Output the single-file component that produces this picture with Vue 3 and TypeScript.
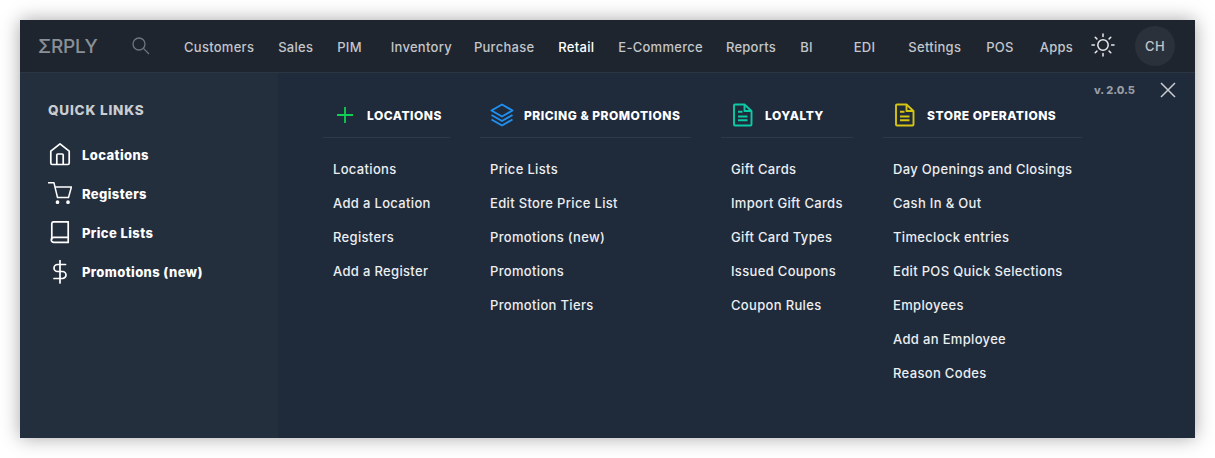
<template>
  <div class="window">
    <header class="topbar">
      <span class="logo">ΣRPLY</span>
      <svg class="search" width="20" height="20" viewBox="0 0 20 20" fill="none" stroke="currentColor" stroke-width="1.3">
        <circle cx="8" cy="8" r="6" />
        <path d="M12.4 12.4 18 18" />
      </svg>
      <nav class="nav">
        <a
          v-for="item in navItems"
          :key="item.label"
          :class="{ active: item.label === 'Retail' }"
          :style="{ marginRight: item.extra + 'px' }"
        >{{ item.label }}</a>
      </nav>
      <svg class="sun" width="24" height="24" viewBox="0 0 24 24" fill="none" stroke="currentColor" stroke-width="1.5" stroke-linecap="round">
        <circle cx="12" cy="12" r="5.2" />
        <path d="M12 1v2.4M12 20.6V23M1 12h2.4M20.6 12H23M4.2 4.2 5.9 5.9M18.1 18.1l1.7 1.7M4.2 19.8l1.7-1.7M18.1 5.9l1.7-1.7" />
      </svg>
      <div class="avatar">CH</div>
    </header>

    <div class="panel">
      <aside class="sidebar">
        <h3>QUICK LINKS</h3>
        <a class="quick"><svg width="24" height="24" viewBox="0 0 24 24" fill="none" stroke="currentColor" stroke-width="1.7" stroke-linejoin="round">
          <path d="M2.800 8.200 12 0.900l9.200 7.300V20a1.500 1.500 0 0 1-1.500 1.500H4.300A1.500 1.500 0 0 1 2.800 20z" />
          <path d="M8.800 21.500V12a1 1 0 0 1 1-1h4.400a1 1 0 0 1 1 1v9.500" />
        </svg>Locations</a>
        <a class="quick"><svg width="24" height="24" viewBox="0 0 24 24" fill="none" stroke="currentColor" stroke-width="1.5" stroke-linecap="round" stroke-linejoin="round">
          <path d="M0.500 0.800H6l3.500 14.700h11L23.400 5H6.800" />
          <circle cx="9.500" cy="20.200" r="1.100" fill="currentColor" />
          <circle cx="20" cy="20.200" r="1.100" fill="currentColor" />
        </svg>Registers</a>
        <a class="quick"><svg width="24" height="24" viewBox="0 0 24 24" fill="none" stroke="currentColor" stroke-width="1.7" stroke-linejoin="round">
          <path d="M3.800 18.800V2.800a2 2 0 0 1 2-2h14.400v20.600H5.800a2.300 2.300 0 0 1 0-5h14.400" />
        </svg>Price Lists</a>
        <a class="quick"><svg width="24" height="24" viewBox="0 0 24 24" fill="none" stroke="currentColor" stroke-width="1.7" stroke-linecap="round" stroke-linejoin="round">
          <path d="M12 0v23M17.500 4.500H9.500a3.500 3.500 0 0 0 0 7h5a3.500 3.500 0 0 1 0 7H6" />
        </svg>Promotions (new)</a>
      </aside>

      <main class="menu">
        <section v-for="col in columns" :key="col.title" class="column" :style="{ width: col.width + 'px' }">
          <div class="head">
            <span class="head-icon">
              <svg v-if="col.icon === 'plus'" class="plus" width="18" height="18" viewBox="0 0 18 18" fill="none" stroke="#0fd052" stroke-width="1.800">
                <path d="M9 1v16M1 9h16" />
              </svg>
              <svg v-else-if="col.icon === 'layers'" width="24" height="24" viewBox="0 0 24 24" fill="none" stroke="#2090f0" stroke-width="2" stroke-linejoin="round">
                <path d="M12 1.500 22.500 7.500 12 13.500 1.500 7.500z" />
                <path d="M1.500 12 12 18l10.500-6" />
                <path d="M1.500 16.500 12 22.500l10.500-6" />
              </svg>
              <svg v-else width="24" height="24" viewBox="0 0 24 24" fill="none" :stroke="col.color" stroke-width="1.900" stroke-linejoin="round">
                <path d="M4 1.500h9.500l7 6.500v13.500a1 1 0 0 1-1 1H4a1 1 0 0 1-1-1v-19a1 1 0 0 1 1-1z" />
                <path d="M13.500 1.500V8h7M7 8.700h4.500M7 13.500h9.500M7 17.200h9.500" />
              </svg>
            </span>
            <span class="head-title">{{ col.title }}</span>
          </div>
          <ul>
            <li v-for="link in col.links" :key="link">{{ link }}</li>
          </ul>
        </section>
      </main>

      <span class="version">v. 2.0.5</span>
      <svg class="close" width="16" height="16" viewBox="0 0 16 16" fill="none" stroke="currentColor" stroke-width="1.500">
        <path d="M1 1l14 14M15 1 1 15" />
      </svg>
    </div>
  </div>
</template>

<script setup lang="ts">
interface NavItem {
  label: string;
  extra: number;
}

interface Column {
  title: string;
  icon: "plus" | "layers" | "file";
  color?: string;
  width: number;
  links: string[];
}

const navItems: NavItem[] = [
  { label: "Customers", extra: 0 },
  { label: "Sales", extra: 0 },
  { label: "PIM", extra: 5 },
  { label: "Inventory", extra: -2 },
  { label: "Purchase", extra: 0 },
  { label: "Retail", extra: 0 },
  { label: "E-Commerce", extra: -1 },
  { label: "Reports", extra: 0 },
  { label: "BI", extra: 17 },
  { label: "EDI", extra: 9 },
  { label: "Settings", extra: 1 },
  { label: "POS", extra: 2 },
  { label: "Apps", extra: 0 },
];

const columns: Column[] = [
  {
    title: "LOCATIONS",
    icon: "plus",
    width: 127,
    links: ["Locations", "Add a Location", "Registers", "Add a Register"],
  },
  {
    title: "PRICING & PROMOTIONS",
    icon: "layers",
    width: 211,
    links: ["Price Lists", "Edit Store Price List", "Promotions (new)", "Promotions", "Promotion Tiers"],
  },
  {
    title: "LOYALTY",
    icon: "file",
    color: "#0ccaa6",
    width: 132,
    links: ["Gift Cards", "Import Gift Cards", "Gift Card Types", "Issued Coupons", "Coupon Rules"],
  },
  {
    title: "STORE OPERATIONS",
    icon: "file",
    color: "#d6c412",
    width: 199,
    links: [
      "Day Openings and Closings",
      "Cash In & Out",
      "Timeclock entries",
      "Edit POS Quick Selections",
      "Employees",
      "Add an Employee",
      "Reason Codes",
    ],
  },
];
</script>

<style>
html,
body {
  background: #fff;
}
</style>

<style scoped>
.window {
  margin: 20px;
  width: 1175px;
  height: 418px;
  display: flex;
  flex-direction: column;
  background: #1f2a3b;
  box-shadow: 0 0 18px rgba(0, 0, 0, 0.35);
  font-family: Inter, "Liberation Sans", sans-serif;
  color: #fff;
  overflow: hidden;
}
.topbar {
  height: 53px;
  flex: none;
  box-sizing: border-box;
  display: flex;
  align-items: center;
  padding: 0 20px 0 18px;
  background: #1e252f;
  border-bottom: 1px solid #2c3542;
}
.logo {
  width: 60px;
  font-size: 19px;
  font-weight: 500;
  line-height: 1;
  letter-spacing: -0.2px;
  color: #8b9097;
}
.search {
  margin-left: 33px;
  color: #6f757c;
}
.nav {
  display: flex;
  gap: 24px;
  margin-left: 33px;
  padding-top: 2px;
  font-size: 13px;
  font-weight: 500;
  letter-spacing: 0.27px;
  color: #c3c6ca;
}
.nav .active {
  color: #fff;
}
.sun {
  margin-left: auto;
  margin-bottom: 2px;
  color: #e8e9ea;
}
.avatar {
  width: 40px;
  height: 40px;
  margin-left: 20px;
  border-radius: 50%;
  background: #2a313a;
  color: #c3c6ca;
  font-size: 13px;
  font-weight: 500;
  letter-spacing: 0.3px;
  display: flex;
  align-items: center;
  justify-content: center;
}
.panel {
  position: relative;
  flex: 1;
  display: flex;
}
.sidebar {
  width: 258px;
  flex: none;
  box-sizing: border-box;
  padding: 28px 0 0 28px;
  background: #242f3e;
}
.sidebar h3 {
  margin: 0 0 16px;
  font-size: 13.5px;
  line-height: 18px;
  font-weight: 800;
  letter-spacing: 0.8px;
  color: #c9cdd2;
}
.quick {
  height: 39px;
  display: flex;
  align-items: center;
  gap: 10px;
  font-size: 13px;
  font-weight: 800;
  letter-spacing: 0.4px;
}
.menu {
  display: flex;
  gap: 30px;
  padding: 20px 0 0 45px;
}
.head {
  height: 44px;
  display: flex;
  align-items: center;
  border-bottom: 1px solid #2e3949;
}
.head-icon {
  width: 44px;
  flex: none;
  display: flex;
  justify-content: center;
  box-sizing: border-box;
}
.plus {
  margin-right: 1px;
}
.head-title {
  font-size: 12px;
  font-weight: 800;
  letter-spacing: 0.5px;
  white-space: nowrap;
}
ul {
  list-style: none;
  margin: 14px 0 0;
  padding: 0 10px;
}
li {
  height: 34px;
  line-height: 34px;
  font-size: 13px;
  font-weight: 500;
  letter-spacing: 0.33px;
  color: #eceef0;
  white-space: nowrap;
}
.version {
  position: absolute;
  top: 9px;
  right: 60px;
  font-size: 11px;
  line-height: 16px;
  font-weight: 800;
  color: #989da4;
}
.close {
  position: absolute;
  top: 9px;
  right: 19px;
  color: #c9ccd0;
}
</style>
